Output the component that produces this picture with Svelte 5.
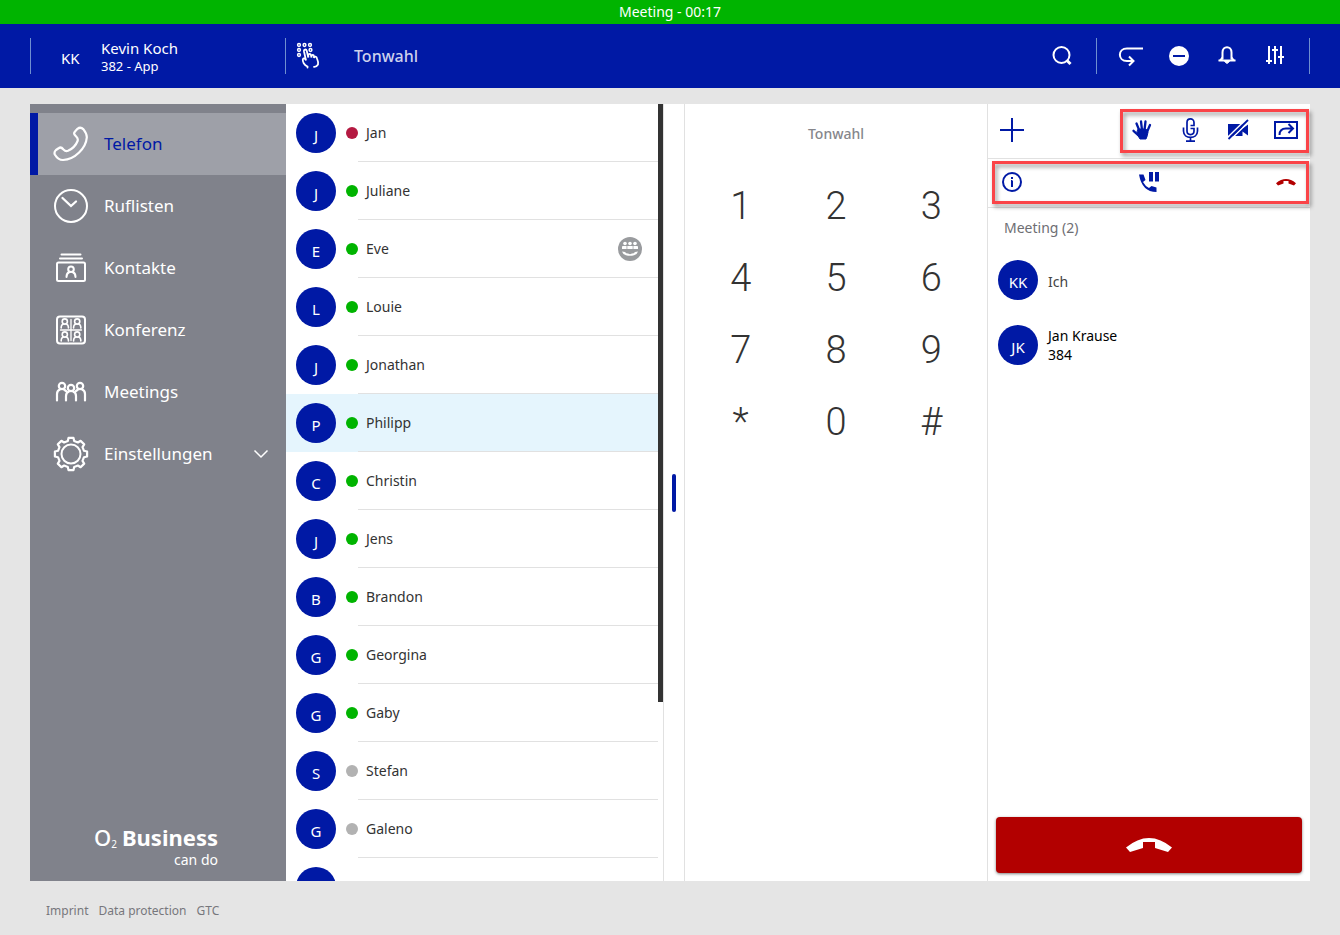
<script lang="ts">
  interface Contact {
    name: string;
    status: 'online' | 'busy' | 'offline';
    meeting?: boolean;
  }

  const navItems = [
    { id: 'phone', label: 'Telefon' },
    { id: 'calls', label: 'Ruflisten' },
    { id: 'contacts', label: 'Kontakte' },
    { id: 'conference', label: 'Konferenz' },
    { id: 'meetings', label: 'Meetings' },
    { id: 'settings', label: 'Einstellungen' }
  ];

  const contacts: Contact[] = [
    { name: 'Jan', status: 'busy' },
    { name: 'Juliane', status: 'online' },
    { name: 'Eve', status: 'online', meeting: true },
    { name: 'Louie', status: 'online' },
    { name: 'Jonathan', status: 'online' },
    { name: 'Philipp', status: 'online' },
    { name: 'Christin', status: 'online' },
    { name: 'Jens', status: 'online' },
    { name: 'Brandon', status: 'online' },
    { name: 'Georgina', status: 'online' },
    { name: 'Gaby', status: 'online' },
    { name: 'Stefan', status: 'offline' },
    { name: 'Galeno', status: 'offline' },
    { name: 'Sabine', status: 'offline' }
  ];

  const keys = ['1', '2', '3', '4', '5', '6', '7', '8', '9', '*', '0', '#'];

  // outline of a gear with eight teeth around (18, 18)
  const gearPath = 'M' + Array.from({ length: 8 }, (_, i) =>
    [[-14, 13.4], [-9, 16.3], [9, 16.3], [14, 13.4]]
      .map(([offset, radius]) => {
        const angle = ((i * 45 + offset) * Math.PI) / 180;
        return `${(18 + radius * Math.cos(angle)).toFixed(1)} ${(18 + radius * Math.sin(angle)).toFixed(1)}`;
      })
      .join('L')
  ).join('L') + 'Z';

  let active = $state('phone');
  let selected = $state('Philipp');
</script>

{#snippet person(x: number, y: number)}
  <g transform="translate({x} {y})">
    <circle cx="0" cy="-2" r="2.6" />
    <path d="M-3.600 4.500V3.600Q-3.600 1.500-1.600 .6M3.600 4.500V3.600Q3.600 1.500 1.600 .6" />
  </g>
{/snippet}

<div class="app">
  <div class="call-bar">Meeting - 00:17</div>

  <header class="header">
    <div class="user">
      <span class="user-initials">KK</span>
      <div class="user-text">
        <div class="user-name">Kevin Koch</div>
        <div class="user-line">382 - App</div>
      </div>
    </div>
    <div class="title">
      <svg width="26" height="28" viewBox="0 0 26 28" fill="none" stroke="#fff" stroke-linecap="round">
        <g stroke-width="1.500">
          <circle cx="3" cy="3" r="1.4" /><circle cx="8.500" cy="3" r="1.4" /><circle cx="14" cy="3" r="1.4" />
          <circle cx="3" cy="8" r="1.4" /><circle cx="14.500" cy="8" r="1.4" /><circle cx="3" cy="13" r="1.4" />
        </g>
        <path stroke-width="1.800" d="M11.500 25.500V24.500C8 23 6.500 19.500 6.800 17.500C7.200 15.500 9.200 16.200 10 18.500L8 9.500C7.600 7.200 10.200 6.700 10.800 9L12.300 15.500V13.200C12.500 11.500 14.600 11.500 15 13.200L15.500 15.500V14C15.800 12.500 17.700 12.600 18 14.200V16C18.500 14 20.500 14.300 21 16.500Q22.500 20 22 22.500Q20.500 25 18 24.800" />
      </svg>
      <h1>Tonwahl</h1>
    </div>
    <div class="header-actions">
      <button class="search" aria-label="Suche">
        <svg width="24" height="24" viewBox="0 0 24 24" fill="none" stroke="#fff" stroke-width="2">
          <circle cx="11.500" cy="11" r="8" /><path stroke-width="3" d="M16.500 16l4 4" />
        </svg>
      </button>
      <div class="header-group">
        <button aria-label="Weiterleitung">
          <svg width="26" height="24" viewBox="0 0 26 24" fill="none" stroke="#fff" stroke-width="2">
            <path d="M25 4.500H9C-.5 4.500-.5 17 9 17h6M11 12.500l4.500 4.500-4.500 4.500" />
          </svg>
        </button>
        <button aria-label="Nicht stören">
          <svg width="24" height="24" viewBox="0 0 24 24"><circle cx="12" cy="12" r="10" fill="#fff" /><path d="M6 12h12" stroke="#0019a5" stroke-width="2" /></svg>
        </button>
        <button aria-label="Benachrichtigungen">
          <svg width="24" height="24" viewBox="0 0 24 24" fill="none" stroke="#fff" stroke-width="2">
            <path d="M7.500 15.500V8.500C7.500 1.500 16.500 1.500 16.500 8.500V15.500" /><path d="M3.500 17h17L16.500 12v4h-9v-4z" fill="#fff" stroke="none" /><path d="M3.500 16.500h17" /><path d="M9.500 17.500h5l-2.500 2z" fill="#fff" stroke-width="1" />
          </svg>
        </button>
        <button aria-label="Audioeinstellungen">
          <svg width="24" height="24" viewBox="0 0 24 24" fill="none" stroke="#fff" stroke-width="2">
            <path d="M6 2v18M12 2v18M18 2v18M3 17h6M9 6h6M15 13h6" />
          </svg>
        </button>
      </div>
    </div>
  </header>

  <main class="panels">
    <nav class="sidebar">
      {#each navItems as item (item.id)}
        <button class="nav-item" class:active={active === item.id} onclick={() => (active = item.id)}>
          <svg width="36" height="36" viewBox="0 0 36 36" fill="none" stroke="#fff" stroke-width="2" stroke-linejoin="round" stroke-linecap="round">
            {#if item.id === 'phone'}
              <path d="M22.500 7.500Q21 9 22.500 11L24.500 13Q25.800 14.500 25 16.500C23 20.500 20 23.500 16 25.200Q14 26 12.500 24.500L11 22.800Q8.500 20.500 6 22L3 24.200Q1 26 2.200 28.800Q5 34 10.500 34C21 33.500 33.500 22 34 11Q34 6 31 3Q27.500.2 25 3.800ZM3 26.500Q5 31 10 30.500C19 30 28.500 21.500 30.500 11.500" stroke="none" />
              <path stroke-width="2.200" d="M22 5.600L24.500 2.800Q27.500.4 30.500 3.400Q34 8 33.800 11.500C33 22 22 33.500 10 34Q5 34 1.800 28.500Q.8 26 3 24L6 22Q8 20.500 10.500 23.500Q12.500 25.700 15 24.800C19.500 22.800 22.800 19.500 24.600 15Q25.400 12.700 23.200 10.500L21.600 8.800Q20.500 7 22 5.600Z" />
            {:else if item.id === 'calls'}
              <circle cx="18" cy="18" r="16" /><path d="M9.500 10l8.500 8 5-4.500" stroke-width="2.300" stroke-linejoin="miter" />
            {:else if item.id === 'contacts'}
              <path d="M8.500 4.500h19M7 8.500h22" /><rect x="4" y="12.500" width="28" height="18.500" rx="1.500" />
              <circle cx="18" cy="19.200" r="2.800" /><path d="M13.500 27Q13.500 23 16.500 22M22.500 27Q22.500 23 19.500 22" />
            {:else if item.id === 'conference'}
              <rect x="4" y="4.500" width="28" height="27" rx="3" />
              <g stroke-width="1.600">
                <path d="M18 7.500v21M7.500 18h21" stroke-width="1.300" />
                {@render person(11.8, 11.5)}{@render person(24.2, 11.5)}{@render person(11.8, 24.5)}{@render person(24.2, 24.5)}
              </g>
            {:else if item.id === 'meetings'}
              <g stroke-width="2.200">
                <circle cx="9" cy="12" r="3.200" /><circle cx="27" cy="12" r="3.200" /><circle cx="18" cy="14" r="3.200" />
                <path d="M4 26.500V20Q4 16.500 7 15.500M32 26.500V20Q32 16.500 29 15.500M11 15.500L13 17M25 15.500L23 17M13 26.500V22Q13 18.500 16 17.500M23 26.500V22Q23 18.500 20 17.500" />
              </g>
            {:else}
              <circle cx="18" cy="18" r="9.500" />
              <path stroke-width="2.200" d={gearPath} />
            {/if}
          </svg>
          <span>{item.label}</span>
          {#if item.id === 'settings'}
            <svg class="chevron" width="16" height="10" viewBox="0 0 16 10" fill="none" stroke="#fff" stroke-width="1.500"><path d="M1.500 1.500L8 8l6.500-6.500" /></svg>
          {/if}
        </button>
      {/each}
      <div class="brand">
        <div class="brand-name"><span>O</span><small>2</small><b>Business</b></div>
        <div class="brand-claim">can do</div>
      </div>
    </nav>

    <section class="contacts">
      <ul>
        {#each contacts as contact (contact.name)}
          <li>
            <button class="contact" class:selected={selected === contact.name} onclick={() => (selected = contact.name)}>
              <span class="avatar">{contact.name[0]}</span>
              <span class="contact-body">
                <span class="status {contact.status}"></span>
                <span class="contact-name">{contact.name}</span>
                {#if contact.meeting}
                  <svg class="meeting-badge" width="24" height="24" viewBox="0 0 24 24" fill="#fff">
                    <circle cx="12" cy="12" r="12" fill="#999b9e" />
                    <circle cx="7" cy="6.500" r="1.800" /><circle cx="12" cy="6.500" r="1.800" /><circle cx="17" cy="6.500" r="1.800" />
                    <path d="M4 12V9.800Q4 9 5 9h3.600v3zM9.300 12V9h5.400v3zM15.400 12V9H19q1 0 1 .8V12z" />
                    <path d="M4 14.500l3 .5q1 1.500 3 1.500l2 .8 2-.8q2 0 3-1.500l3-.5q-.5 2.500-4 3.700-4 1-8 0-3.500-1.200-4-3.700z" />
                  </svg>
                {/if}
              </span>
            </button>
          </li>
        {/each}
      </ul>
      <div class="scrollbar"><div class="thumb"></div></div>
    </section>

    <div class="splitter"><span></span></div>

    <section class="dialpad">
      <h2>Tonwahl</h2>
      <div class="keys">
        {#each keys as key (key)}
          <button>{key}</button>
        {/each}
      </div>
    </section>

    <section class="meeting">
      <div class="toolbar">
        <button aria-label="Teilnehmer hinzufügen">
          <svg width="24" height="24" viewBox="0 0 24 24" stroke="#0019a5" stroke-width="2"><path d="M12 0v24M0 12h24" /></svg>
        </button>
        <div class="tools marked">
          <button aria-label="Hand heben">
            <svg width="24" height="24" viewBox="0 0 24 24" fill="none" stroke="#0019a5" stroke-linecap="round">
              <path d="M8.500 11L16 11 18 14Q17.500 18 16 21H10Q7.500 18 7 14z" fill="#0019a5" />
              <path stroke-width="2.300" d="M8.500 17.500L3.500 12.800M9.500 13L6.500 5.500M12 12L11 3.500M14.500 12L15.500 3.500M17 14L20 7" />
            </svg>
          </button>
          <button aria-label="Mikrofon">
            <svg width="24" height="24" viewBox="0 0 24 24" fill="none" stroke="#0019a5" stroke-width="1.700">
              <path d="M12.500 7.500H16V4.500C16 -.3 9 -.3 9 4.500V13C9 17.700 16 17.700 16 13V10.500H12.500M5.500 9.500v3.500c0 8.500 14 8.500 14 0V9.500M12.500 19.500v3.500M8 23.200h9" />
            </svg>
          </button>
          <button aria-label="Kamera">
            <svg width="24" height="24" viewBox="0 0 24 24" fill="#0019a5">
              <path d="M2 6h14.500v4.500l5.500-4v11l-5.500-4V18H2z" />
              <path d="M1.500 19.500L21 .5M3.500 22.500L23 3.500" stroke="#fff" stroke-width="1.600" /><path d="M2.500 21L22 2" stroke="#0019a5" stroke-width="1.800" />
            </svg>
          </button>
          <button aria-label="Bildschirm teilen">
            <svg width="24" height="24" viewBox="0 0 24 24" fill="none" stroke="#0019a5" stroke-width="2">
              <rect x="1" y="4" width="22" height="16" /><path d="M5.500 17Q5.500 10.500 12 10.500h6M14.500 6l4.500 4.500-4.500 4.500" />
            </svg>
          </button>
        </div>
      </div>
      <div class="toolbar call-tools marked">
        <button aria-label="Info">
          <svg width="24" height="24" viewBox="0 0 24 24" fill="none" stroke="#0019a5" stroke-width="2">
            <circle cx="12" cy="12" r="9" /><path d="M12 10.500V17M11 11h1M12 7v2" />
          </svg>
        </button>
        <button aria-label="Halten">
          <svg width="24" height="24" viewBox="0 0 24 24" fill="#0019a5">
            <path d="M2 4.500h4.500L8.500 10l-2.500 2q2.500 4.500 6 6l2.500-2 5 1.500V22Q5 22 2 4.500z" /><path d="M12 2h4v9.500h-4zM18 2h4v9.500h-4z" />
          </svg>
        </button>
        <button aria-label="Auflegen">
          <svg width="24" height="24" viewBox="0 0 24 24" fill="#b20000"><path d="M2 13.200Q12 5 22 13.200L20 15.500 14.500 13.500V11h-5v2.500L4 15.500z" /></svg>
        </button>
      </div>

      <h2 class="group-title">Meeting (2)</h2>
      <ul class="participants">
        <li>
          <span class="avatar">KK</span>
          <div class="me">Ich</div>
        </li>
        <li>
          <span class="avatar">JK</span>
          <div>Jan Krause<br />384</div>
        </li>
      </ul>

      <button class="hangup" aria-label="Meeting verlassen">
        <svg width="48" height="16" viewBox="0 0 48 16" fill="#fff"><path d="M1 10.500Q24-8.500 47 10.500L43 15 30 11V5H18v6L5 15z" /></svg>
      </button>
    </section>
  </main>

  <footer class="footer">
    <a href="#imprint">Imprint</a>
    <a href="#privacy">Data protection</a>
    <a href="#gtc">GTC</a>
  </footer>
</div>

<style>
  :global(body) {
    background: #e5e5e5;
  }

  .app {
    --blue: #0019a5;
    --line: #e1e1e1;
    display: flex;
    flex-direction: column;
    height: 100vh;
    font: 14px/20px "Noto Sans", sans-serif;
    color: #333;
  }

  button {
    display: flex;
    align-items: center;
    justify-content: center;
    padding: 0;
    border: 0;
    background: none;
    font: inherit;
    color: inherit;
    cursor: pointer;
  }

  svg {
    display: block;
    flex-shrink: 0;
  }

  ul {
    list-style: none;
    margin: 0;
    padding: 0;
  }

  h1,
  h2 {
    margin: 0;
    font-size: 14px;
    font-weight: 400;
  }

  .call-bar {
    flex-shrink: 0;
    height: 24px;
    line-height: 24px;
    background: #00b400;
    color: #fff;
    text-align: center;
  }

  .header {
    display: flex;
    align-items: center;
    flex-shrink: 0;
    height: 64px;
    padding: 0 30px;
    background: var(--blue);
    color: #fff;
  }

  .user,
  .title,
  .header-group {
    display: flex;
    align-items: center;
    height: 36px;
    border-left: 1px solid #6f8fd0;
  }

  .user {
    box-sizing: border-box;
    width: 255px;
    padding-left: 30px;
  }

  .user-initials {
    width: 40px;
    padding-top: 4px;
    font-size: 15px;
  }

  .user-name {
    font-size: 15px;
  }

  .user-line {
    font-size: 13px;
    line-height: 16px;
  }

  .title {
    gap: 32px;
    padding-left: 10px;
  }

  .title h1 {
    font-size: 16px;
    font-weight: 500;
    color: #ccd1ed;
  }

  .header-actions {
    display: flex;
    align-items: center;
    gap: 22px;
    margin-left: auto;
  }

  .header-group {
    gap: 24px;
    padding: 0 22px;
    border-right: 1px solid #6f8fd0;
  }

  .header-group button {
    width: 24px;
  }

  .panels {
    display: grid;
    grid-template-columns: 256px minmax(0, 378fr) 21px minmax(0, 303fr) minmax(0, 322fr);
    flex: 1;
    min-height: 0;
    margin: 16px 30px 0;
    background: #fff;
  }

  .sidebar {
    display: flex;
    flex-direction: column;
    padding-top: 9px;
    background: #80828b;
    color: #fff;
  }

  .nav-item {
    justify-content: flex-start;
    gap: 15px;
    height: 62px;
    padding: 0 17px 0 15px;
    border-left: 8px solid transparent;
    font-size: 17px;
  }

  .nav-item.active {
    border-color: var(--blue);
    background: #9ea0a8;
    color: var(--blue);
  }

  .chevron {
    margin-left: auto;
  }

  .brand {
    display: grid;
    justify-items: end;
    margin-top: auto;
    padding: 0 68px 12px 0;
  }

  .brand-name {
    display: flex;
    align-items: flex-end;
    font-size: 22px;
    line-height: 26px;
  }

  .brand-name span {
    font-weight: 500;
  }

  .brand-name small {
    margin-right: 5px;
    font-size: 10px;
    line-height: 12px;
  }

  .brand-claim {
    line-height: 19px;
  }

  .contacts {
    display: flex;
    min-height: 0;
    overflow: hidden;
    border-right: 1px solid var(--line);
  }

  .contacts ul {
    flex: 1;
  }

  .contact {
    width: 100%;
    height: 58px;
    padding-left: 10px;
  }

  .contact.selected {
    background: #e5f5fd;
  }

  .avatar {
    flex-shrink: 0;
    box-sizing: border-box;
    width: 40px;
    height: 40px;
    padding-top: 3px;
    border-radius: 50%;
    background: var(--blue);
    color: #fff;
    font-size: 15px;
    line-height: 38px;
    text-align: center;
  }

  .contact-body {
    display: flex;
    align-items: center;
    flex: 1;
    box-sizing: border-box;
    height: 58px;
    padding: 0 16px 0 10px;
    background: linear-gradient(var(--line), var(--line)) 22px 100% / 100% 1px no-repeat;
  }

  .status {
    width: 12px;
    height: 12px;
    margin-right: 8px;
    border-radius: 50%;
    background: #00b400;
  }

  .status.busy {
    background: #b41941;
  }

  .status.offline {
    background: #b2b2b2;
  }

  .meeting-badge {
    margin-left: auto;
  }

  .scrollbar {
    width: 5px;
  }

  .thumb {
    height: 77%;
    background: #333;
  }

  .splitter {
    display: flex;
    align-items: center;
    justify-content: center;
    border-right: 1px solid var(--line);
  }

  .splitter span {
    width: 4px;
    height: 38px;
    border-radius: 2px;
    background: var(--blue);
  }

  .dialpad {
    padding: 20px 8px 0;
    border-right: 1px solid var(--line);
  }

  .dialpad h2 {
    color: #86868b;
    font-weight: 500;
    text-align: center;
  }

  .keys {
    display: grid;
    grid-template-columns: repeat(3, 1fr);
    grid-auto-rows: 72px;
    margin-top: 26px;
    font: 300 38px/72px Roboto, sans-serif;
  }

  .meeting {
    display: flex;
    flex-direction: column;
  }

  .toolbar {
    display: flex;
    justify-content: space-between;
    box-sizing: border-box;
    height: 55px;
    padding: 0 12px 2px;
    border-bottom: 1px solid var(--line);
  }

  .tools {
    display: flex;
    gap: 24px;
  }

  .call-tools {
    height: 49px;
  }

  .marked {
    position: relative;
  }

  .marked::after {
    content: "";
    position: absolute;
    inset: 5px -11px 3px -10px;
    border: 3px solid #fa4448;
    filter: drop-shadow(2px 3px 2px rgba(0, 0, 0, 0.4));
    pointer-events: none;
  }

  .call-tools::after {
    inset: 2px 1px 3px 4px;
  }

  .group-title {
    padding: 10px 16px;
    color: #6e6e73;
  }

  .participants {
    display: grid;
    gap: 25px;
    padding: 12px 10px;
    color: #000;
    line-height: 19px;
  }

  .participants li {
    display: flex;
    align-items: center;
    gap: 10px;
  }

  .me {
    padding-top: 3px;
    color: #444;
  }

  .hangup {
    height: 56px;
    margin: auto 8px 8px;
    border-radius: 4px;
    background: #b20000;
    box-shadow: 0 1px 3px rgba(0, 0, 0, 0.5);
  }

  .footer {
    display: flex;
    gap: 10px;
    flex-shrink: 0;
    padding: 20px 46px 14px;
    font-size: 12px;
  }

  .footer a {
    color: #77777c;
    text-decoration: none;
  }
</style>
